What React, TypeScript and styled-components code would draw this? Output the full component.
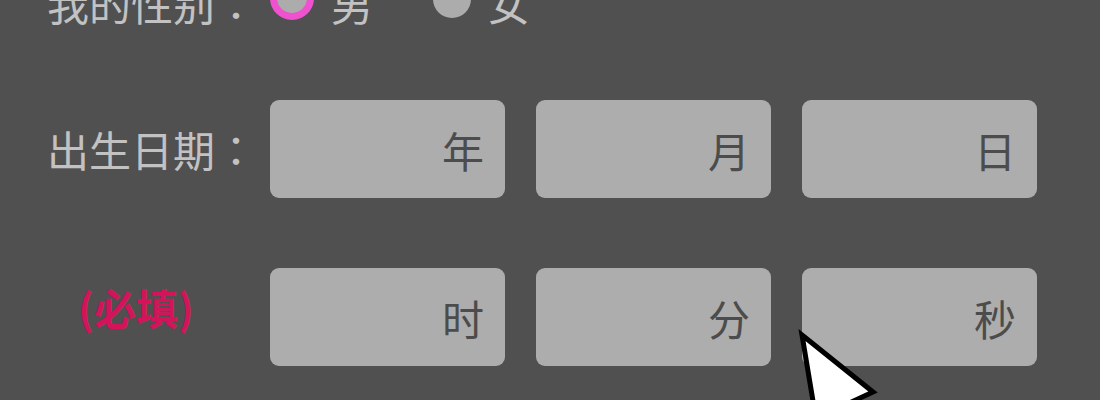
import React from 'react';
import styled, { createGlobalStyle } from 'styled-components';

const GlobalStyle = createGlobalStyle`
  html, body {
    margin: 0;
    padding: 0;
    background: #505050;
    overflow: hidden;
  }
  body {
    font-family: 'Noto Sans CJK SC', 'Noto Sans', sans-serif;
  }
`;

const StyledRoot = styled.div`
  position: relative;
  width: 1100px;
  height: 400px;
  overflow: hidden;
  background: #505050;
`;

const StyledForm = styled.div`
  display: flex;
  flex-direction: column;
  margin-top: -22px;
`;

const StyledRow = styled.div<{ $gap?: number }>`
  display: flex;
  align-items: center;
  margin-top: ${({ $gap }) => `${$gap ?? 0}px`};
`;

const StyledLabel = styled.div`
  width: 270px;
  flex-shrink: 0;
  box-sizing: border-box;
  padding-left: 47px;
  font-family: 'Noto Sans CJK TC', 'Noto Sans CJK SC', sans-serif;
  font-size: 42px;
  line-height: 50px;
  white-space: nowrap;
  color: #c2c2c2;
`;

const RequiredText = styled.div`
  width: 178px;
  margin-bottom: 20px;
  text-align: center;
  color: #d4145a;
  font-family: 'Noto Sans CJK SC', sans-serif;
  font-weight: 700;
  font-size: 42px;
`;

const StyledOptions = styled.div`
  display: flex;
  align-items: center;
  height: 50px;
`;

const StyledOption = styled.label`
  display: flex;
  align-items: center;
  gap: 17px;
  margin-right: 60px;
  font-size: 42px;
  line-height: 50px;
  color: #c2c2c2;
`;

const RadioMark = styled.span<{ $checked?: boolean }>`
  display: block;
  box-sizing: border-box;
  width: ${({ $checked }) => ($checked ? '44px' : '38px')};
  height: ${({ $checked }) => ($checked ? '44px' : '38px')};
  margin-top: ${({ $checked }) => ($checked ? '-10px' : '-8px')};
  border-radius: 50%;
  background: #acacac;
  border: ${({ $checked }) => ($checked ? '7px solid #ee52cf' : 'none')};
`;

const StyledFields = styled.div`
  display: grid;
  grid-template-columns: repeat(3, 235px);
  column-gap: 31px;
`;

const StyledField = styled.div`
  height: 98px;
  box-sizing: border-box;
  border-radius: 9px;
  background: #adadad;
  display: flex;
  align-items: center;
  justify-content: flex-end;
  padding-right: 21px;
  font-size: 42px;
  color: #4c4c4c;
`;

const StyledCursor = styled.svg`
  position: absolute;
  left: 796px;
  top: 329px;
  width: 90px;
  height: 71px;
  overflow: hidden;
`;

function Cursor() {
  return (
    <StyledCursor viewBox="0 0 90 71">
      <polygon
        points="6,6 77,63 49,76 19,84"
        fill="#ffffff"
        stroke="#000000"
        strokeWidth="5"
        strokeLinejoin="miter"
      />
    </StyledCursor>
  );
}

const dateUnits = ['年', '月', '日'];
const timeUnits = ['时', '分', '秒'];

export default function App() {
  return (
    <StyledRoot>
      <GlobalStyle />
      <StyledForm>
        <StyledRow>
          <StyledLabel>我的性别：</StyledLabel>
          <StyledOptions>
            <StyledOption>
              <RadioMark $checked />
              男
            </StyledOption>
            <StyledOption>
              <RadioMark />
              女
            </StyledOption>
          </StyledOptions>
        </StyledRow>
        <StyledRow $gap={72}>
          <StyledLabel>出生日期：</StyledLabel>
          <StyledFields>
            {dateUnits.map(unit => (
              <StyledField key={unit}>{unit}</StyledField>
            ))}
          </StyledFields>
        </StyledRow>
        <StyledRow $gap={70}>
          <StyledLabel>
            <RequiredText>(必填)</RequiredText>
          </StyledLabel>
          <StyledFields>
            {timeUnits.map(unit => (
              <StyledField key={unit}>{unit}</StyledField>
            ))}
          </StyledFields>
        </StyledRow>
      </StyledForm>
      <Cursor />
    </StyledRoot>
  );
}
